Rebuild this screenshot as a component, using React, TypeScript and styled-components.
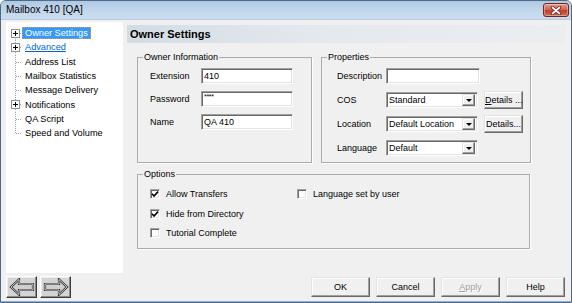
import React from 'react';
import styled, { createGlobalStyle } from 'styled-components';

type TreeItem = {
	label: string;
	expandable?: boolean;
	selected?: boolean;
	hot?: boolean;
};

const treeItems: TreeItem[] = [
	{ label: 'Owner Settings', expandable: true, selected: true },
	{ label: 'Advanced', expandable: true, hot: true },
	{ label: 'Address List' },
	{ label: 'Mailbox Statistics' },
	{ label: 'Message Delivery' },
	{ label: 'Notifications', expandable: true },
	{ label: 'QA Script' },
	{ label: 'Speed and Volume' },
];

const GlobalStyle = createGlobalStyle`
	html, body {
		margin: 0;
		padding: 0;
		background: #ffffff;
	}
	body {
		font-family: "Liberation Sans", Arial, sans-serif;
		color: #000000;
	}
`;

function TreeLines({ first, last, expandable }: { first: boolean; last: boolean; expandable?: boolean }) {
	return (
		<svg width="16" height="14.3" viewBox="0 0 16 14.3" style={{ flex: 'none' }}>
			<line x1="9.5" x2="9.5" y1={first ? 7.5 : 0} y2={last ? 7.5 : 14.3} stroke="#a0a0a0" strokeDasharray="1 1" />
			<line x1="10" x2="16" y1="7.5" y2="7.5" stroke="#a0a0a0" strokeDasharray="1 1" />
			{expandable && (
				<>
					<rect x="5.5" y="3.5" width="8" height="8" fill="#ffffff" stroke="#8f8f8f" />
					<path d="M7 7.5h5M9.5 5v5" stroke="#000000" />
				</>
			)}
		</svg>
	);
}

function CloseGlyph() {
	return (
		<svg width="12" height="9" viewBox="0 0 12 9">
			<path d="M2.5 1.5l7 6M9.5 1.5l-7 6" stroke="#6b2418" strokeWidth="3.4" strokeLinecap="round" />
			<path d="M2.5 1.5l7 6M9.5 1.5l-7 6" stroke="#ffffff" strokeWidth="1.7" strokeLinecap="round" />
		</svg>
	);
}

function NavArrow({ direction }: { direction: 'left' | 'right' }) {
	const points =
		direction === 'left'
			? '2,9 10,1.5 10,6 24,6 24,12 10,12 10,16.5'
			: '24,9 16,1.5 16,6 2,6 2,12 16,12 16,16.5';
	return (
		<svg width="26" height="18" viewBox="0 0 26 18">
			<polygon points={points} fill="#cfcfcf" stroke="#2b2b2b" strokeWidth="2.2" strokeLinejoin="miter" />
			<polygon points={points} fill="none" stroke="#f6f6f6" strokeWidth="0.8" strokeLinejoin="miter" />
		</svg>
	);
}

function CheckMark() {
	return (
		<svg width="8" height="8" viewBox="0 0 8 8">
			<polyline points="1,3.8 3,6 7,1.6" fill="none" stroke="#000000" strokeWidth="1.6" />
		</svg>
	);
}

function Combo({ value }: { value: string }) {
	return (
		<ComboBox>
			<ComboValue>{value}</ComboValue>
			<DropButton>
				<DropTriangle />
			</DropButton>
		</ComboBox>
	);
}

function Option({ label, checked }: { label: string; checked?: boolean }) {
	return (
		<OptionRow>
			<CheckBox>{checked && <CheckMark />}</CheckBox>
			<span>{label}</span>
		</OptionRow>
	);
}

export default function App() {
	return (
		<>
			<GlobalStyle />
			<Window>
				<TitleBar>
					<Title>Mailbox 410 [QA]</Title>
					<CloseButton>
						<CloseGlyph />
					</CloseButton>
				</TitleBar>
				<Body>
					<Tree>
						{treeItems.map((item, i) => (
							<TreeRow key={item.label}>
								<TreeLines first={i === 0} last={i === treeItems.length - 1} expandable={item.expandable} />
								<TreeLabel $selected={item.selected} $hot={item.hot}>
									{item.label}
								</TreeLabel>
							</TreeRow>
						))}
					</Tree>

					<Main>
						<PageHeader>Owner Settings</PageHeader>
						<Content>
							<TopRow>
								<GroupBox $width={175}>
									<Legend>Owner Information</Legend>
									<OwnerFields>
										<FormRow>
											<FieldLabel $width={51}>Extension</FieldLabel>
											<TextBox $width={92}>410</TextBox>
										</FormRow>
										<FormRow>
											<FieldLabel $width={51}>Password</FieldLabel>
											<TextBox $width={92}>
												<Masked>****</Masked>
											</TextBox>
										</FormRow>
										<FormRow>
											<FieldLabel $width={51}>Name</FieldLabel>
											<TextBox $width={92}>QA 410</TextBox>
										</FormRow>
									</OwnerFields>
								</GroupBox>

								<GroupBox $width={210}>
									<Legend>Properties</Legend>
									<PropertyFields>
										<FormRow>
											<FieldLabel $width={49}>Description</FieldLabel>
											<TextBox $width={94} />
										</FormRow>
										<FormRow>
											<FieldLabel $width={49}>COS</FieldLabel>
											<Combo value="Standard" />
											<DetailsButton>
												<u>D</u>etails ...
											</DetailsButton>
										</FormRow>
										<FormRow>
											<FieldLabel $width={49}>Location</FieldLabel>
											<Combo value="Default Location" />
											<DetailsButton>Details...</DetailsButton>
										</FormRow>
										<FormRow>
											<FieldLabel $width={49}>Language</FieldLabel>
											<Combo value="Default" />
										</FormRow>
									</PropertyFields>
								</GroupBox>
							</TopRow>

							<GroupBox $width={393}>
								<Legend>Options</Legend>
								<OptionsGrid>
									<Option label="Allow Transfers" checked />
									<Option label="Language set by user" />
									<Option label="Hide from Directory" checked />
									<span />
									<Option label="Tutorial Complete" />
								</OptionsGrid>
							</GroupBox>
						</Content>
					</Main>

					<NavButtons>
						<NavButton>
							<NavArrow direction="left" />
						</NavButton>
						<NavButton>
							<NavArrow direction="right" />
						</NavButton>
					</NavButtons>

					<DialogButtons>
						<DialogButton>OK</DialogButton>
						<DialogButton>Cancel</DialogButton>
						<DialogButton disabled>
							<u>A</u>pply
						</DialogButton>
						<DialogButton>Help</DialogButton>
					</DialogButtons>
				</Body>
			</Window>
		</>
	);
}

const Window = styled.div`
	box-sizing: border-box;
	width: 572px;
	height: 303px;
	display: flex;
	flex-direction: column;
	border: 1px solid #4c6a8a;
	border-radius: 6px 6px 0 0;
	overflow: hidden;
	background: #f0f0f0;
`;

const TitleBar = styled.div`
	flex: none;
	height: 19px;
	display: flex;
	align-items: center;
	justify-content: space-between;
	padding: 0 2px 0 5px;
	background: linear-gradient(#afc8e3, #c3d7ec 55%, #cadcef);
	border-bottom: 1px solid #b7cbe0;
	box-sizing: border-box;
`;

const Title = styled.span`
	font-size: 10px;
	line-height: 12px;
	color: #000000;
`;

const CloseButton = styled.div`
	box-sizing: border-box;
	width: 26px;
	height: 14px;
	display: flex;
	align-items: center;
	justify-content: center;
	border: 1px solid #6e2a1f;
	border-radius: 3px;
	background: linear-gradient(#e79a8c, #d56451 45%, #c0412d 55%, #cf6a50);
	box-shadow: inset 0 0 0 1px rgba(255, 255, 255, 0.35);
`;

const Body = styled.div`
	flex: 1;
	min-height: 0;
	display: grid;
	grid-template-columns: 117px 1fr;
	grid-template-rows: 1fr 22px;
	column-gap: 4px;
	row-gap: 3px;
	padding: 2px 6px 3px 5px;
	border-bottom: 1px solid #8fb0d2;
`;

const Tree = styled.ul`
	margin: 0;
	padding: 4px 0 0 0;
	list-style: none;
	background: #ffffff;
	font-size: 9.2px;
`;

const TreeRow = styled.li`
	display: flex;
	align-items: center;
	height: 14.3px;
	white-space: nowrap;
`;

const TreeLabel = styled.span<{ $selected?: boolean; $hot?: boolean }>`
	box-sizing: border-box;
	height: 12px;
	line-height: 10px;
	padding: 0 2px;
	border: 1px dotted ${({ $selected }) => ($selected ? '#d99a4a' : 'transparent')};
	background: ${({ $selected }) => ($selected ? '#3399ff' : 'transparent')};
	color: ${({ $selected, $hot }) => ($selected ? '#ffffff' : $hot ? '#0066cc' : '#000000')};
	text-decoration: ${({ $hot }) => ($hot ? 'underline' : 'none')};
`;

const Main = styled.div`
	display: flex;
	flex-direction: column;
	min-width: 0;
	padding-top: 3px;
`;

const PageHeader = styled.div`
	height: 18px;
	display: flex;
	align-items: center;
	padding-left: 3px;
	background: linear-gradient(to right, #d3dce5, #e4e9ee 45%, #ebeef1);
	font-size: 11px;
	font-weight: bold;
`;

const Content = styled.div`
	display: flex;
	flex-direction: column;
	align-items: flex-start;
	gap: 6px;
	padding: 9px 0 0 10px;
`;

const TopRow = styled.div`
	display: flex;
	gap: 9px;
`;

const GroupBox = styled.fieldset<{ $width: number }>`
	box-sizing: border-box;
	width: ${({ $width }) => $width}px;
	min-width: 0;
	margin: 0;
	padding: 0;
	border: 1px solid #acacac;
	box-shadow: 1px 1px 0 #ffffff;
`;

const Legend = styled.legend`
	margin-left: 5px;
	padding: 0 1px;
	font-size: 9px;
	line-height: 10px;
`;

const OwnerFields = styled.div`
	display: flex;
	flex-direction: column;
	gap: 7px;
	padding: 6px 0 0 12px;
`;

const PropertyFields = styled.div`
	display: flex;
	flex-direction: column;
	gap: 8px;
	padding: 6px 7px 6px 15px;
`;

const FormRow = styled.div`
	display: flex;
	align-items: center;
	height: 16px;
`;

const FieldLabel = styled.span<{ $width: number }>`
	flex: none;
	width: ${({ $width }) => $width}px;
	font-size: 9px;
	white-space: nowrap;
`;

const sunken = `
	box-sizing: border-box;
	background: #ffffff;
	border: 1px solid;
	border-color: #a0a0a0 #ffffff #ffffff #a0a0a0;
	box-shadow: inset 1px 1px 0 #696969, inset -1px -1px 0 #e3e3e3;
`;

const TextBox = styled.div<{ $width: number }>`
	${sunken}
	flex: none;
	width: ${({ $width }) => $width}px;
	height: 16px;
	padding: 0 2px;
	font-size: 9px;
	line-height: 14px;
	white-space: nowrap;
`;

const Masked = styled.span`
	display: block;
	font-size: 7px;
	line-height: 9px;
	letter-spacing: -0.3px;
`;

const ComboBox = styled.div`
	${sunken}
	flex: none;
	width: 92px;
	height: 16px;
	display: flex;
	align-items: center;
	padding: 1px 2px 1px 2px;
`;

const ComboValue = styled.span`
	flex: 1;
	font-size: 9px;
	white-space: nowrap;
	overflow: hidden;
`;

const DropButton = styled.span`
	box-sizing: border-box;
	flex: none;
	width: 13px;
	height: 12px;
	display: flex;
	align-items: center;
	justify-content: center;
	background: #f0f0f0;
	border: 1px solid;
	border-color: #e3e3e3 #696969 #696969 #e3e3e3;
	box-shadow: inset -1px -1px 0 #a0a0a0, inset 1px 1px 0 #ffffff;
`;

const DropTriangle = styled.span`
	width: 0;
	height: 0;
	border-left: 3px solid transparent;
	border-right: 3px solid transparent;
	border-top: 3px solid #000000;
`;

const raised = `
	box-sizing: border-box;
	background: #f0f0f0;
	border: 1px solid;
	border-color: #e3e3e3 #696969 #696969 #e3e3e3;
	box-shadow: inset -1px -1px 0 #a0a0a0, inset 1px 1px 0 #ffffff;
	font-family: "Liberation Sans", Arial, sans-serif;
	color: #000000;
	padding: 0;
	white-space: nowrap;
`;

const DetailsButton = styled.button`
	${raised}
	flex: none;
	width: 39px;
	height: 18px;
	margin-left: 6px;
	font-size: 9px;
`;

const OptionsGrid = styled.div`
	display: grid;
	grid-template-columns: 147px auto;
	grid-auto-rows: 12px;
	row-gap: 7.5px;
	padding: 9px 0 9px 12px;
`;

const OptionRow = styled.div`
	display: flex;
	align-items: center;
	gap: 6px;
	font-size: 9px;
	white-space: nowrap;
`;

const CheckBox = styled.span`
	${sunken}
	flex: none;
	width: 10px;
	height: 10px;
	display: flex;
	align-items: center;
	justify-content: center;
`;

const NavButtons = styled.div`
	display: flex;
	gap: 3px;
`;

const NavButton = styled.button`
	box-sizing: border-box;
	width: 31px;
	height: 22px;
	padding: 0;
	display: flex;
	align-items: center;
	justify-content: center;
	background: #d4d4d4;
	border: 1px solid;
	border-color: #ffffff #3c3c3c #3c3c3c #ffffff;
	box-shadow: inset -1px -1px 0 #8a8a8a, inset 1px 1px 0 #ececec;
`;

const DialogButtons = styled.div`
	display: flex;
	align-items: center;
	justify-content: flex-end;
	gap: 6px;
`;

const DialogButton = styled.button`
	${raised}
	width: 59px;
	height: 20px;
	font-size: 9px;

	&:disabled {
		color: #a0a0a0;
		text-shadow: 1px 1px 0 #ffffff;
	}
`;
